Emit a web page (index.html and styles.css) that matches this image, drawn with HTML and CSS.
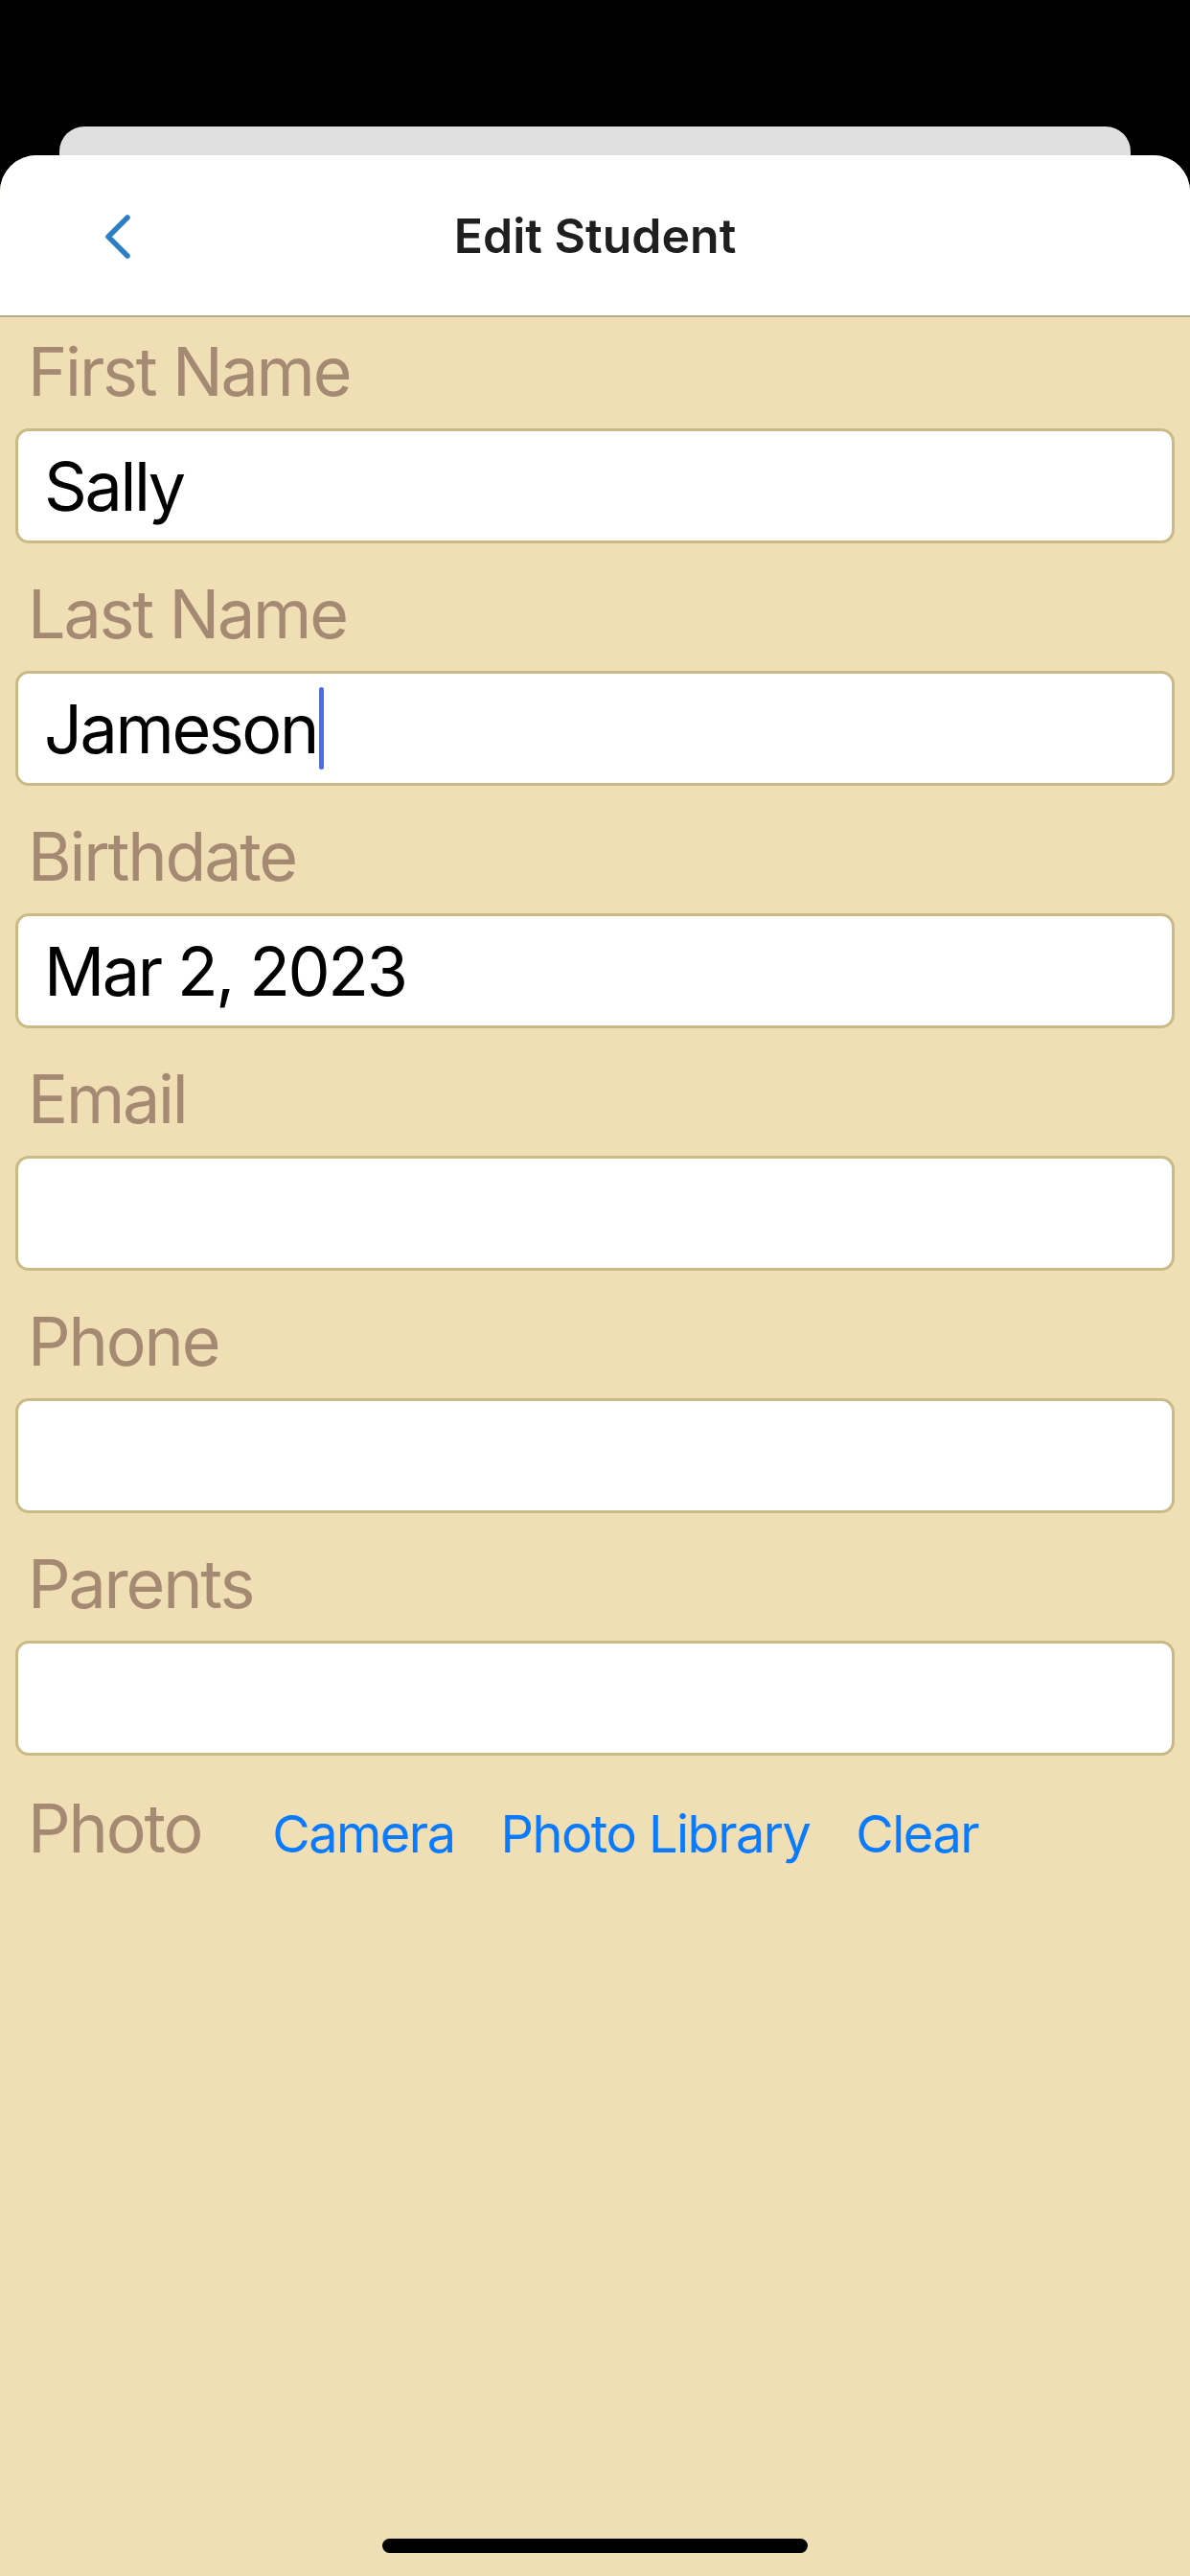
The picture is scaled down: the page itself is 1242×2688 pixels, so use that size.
FILE: index.html
```html
<!DOCTYPE html>
<html lang="en">
<head>
  <meta charset="UTF-8" />
  <title>Edit Student</title>
  <link rel="stylesheet" href="styles.css">
</head>
<body>
  <div class="screen">
    <div class="backdrop">
      <div class="peek"></div>
    </div>

    <div class="sheet">
      <header class="nav">
        <button class="back" aria-label="Back">
          <svg width="32" height="48" viewBox="0 0 32 48">
            <path d="M27 4 L7 24 L27 44" fill="none" stroke="#2b7fc3" stroke-width="5.5" stroke-linecap="round" stroke-linejoin="round"/>
          </svg>
        </button>
        <h1>Edit Student</h1>
      </header>

      <main class="form">
        <label class="label">First Name</label>
        <div class="field">Sally</div>

        <label class="label">Last Name</label>
        <div class="field">Jameson<span class="caret"></span></div>

        <label class="label">Birthdate</label>
        <div class="field">Mar 2, 2023</div>

        <label class="label">Email</label>
        <div class="field"></div>

        <label class="label">Phone</label>
        <div class="field"></div>

        <label class="label">Parents</label>
        <div class="field"></div>

        <div class="photo-row">
          <span class="label photo-label">Photo</span>
          <a class="link">Camera</a>
          <a class="link">Photo Library</a>
          <a class="link">Clear</a>
        </div>
      </main>

      <div class="home">
        <div class="home-bar"></div>
      </div>
    </div>
  </div>
</body>
</html>
```

FILE: styles.css
```css
* { box-sizing: border-box; }
html, body {
  margin: 0;
  background: #000;
}
body {
  font-family: Inter, "Noto Sans", "Liberation Sans", sans-serif;
}
.screen {
  width: 1242px;
  height: 2688px;
  display: flex;
  flex-direction: column;
  background: #000;
  overflow: hidden;
}
.backdrop {
  height: 162px;
  padding: 132px 62px 0;
}
.peek {
  height: 30px;
  background: #e0e0e0;
  border-radius: 26px 26px 0 0;
}
.sheet {
  flex: 1;
  display: flex;
  flex-direction: column;
  background: #f0dfb4;
  border-radius: 38px 38px 0 0;
  overflow: hidden;
}
.nav {
  height: 169px;
  background: #fff;
  border-bottom: 2px solid #b8ab8a;
  display: flex;
  align-items: center;
  justify-content: center;
  position: relative;
}
.nav h1 {
  margin: 0;
  font-size: 50px;
  font-weight: 600;
  color: #1f1f1f;
  letter-spacing: 0;
}
.back {
  position: absolute;
  left: 106px;
  top: 61px;
  border: none;
  background: none;
  padding: 0;
  display: flex;
}
.form {
  flex: 1;
  display: flex;
  flex-direction: column;
  padding: 15px 16px 0;
}
.label {
  display: block;
  font-size: 70px;
  line-height: 84px;
  color: #a58a73;
  letter-spacing: -2.2px;
  padding-left: 13px;
  margin-bottom: 17px;
}
.field {
  height: 120px;
  background: #fff;
  border: 3px solid #c9ba86;
  border-radius: 14px;
  margin-bottom: 32px;
  padding: 0 27px;
  display: flex;
  align-items: center;
  font-size: 70px;
  letter-spacing: -2.4px;
  color: #000;
}
.caret {
  width: 5px;
  height: 86px;
  margin-left: 2px;
  background: #4a6cf0;
  border-radius: 3px;
}
.photo-row {
  display: flex;
  align-items: baseline;
  margin-top: 2px;
}
.photo-label {
  margin-bottom: 0;
  margin-right: 74px;
}
.link {
  font-size: 54px;
  letter-spacing: -1.5px;
  color: #0a7aff;
  margin-right: 48px;
}
.home {
  display: flex;
  justify-content: center;
  padding-bottom: 24px;
}
.home-bar {
  width: 444px;
  height: 15px;
  border-radius: 8px;
  background: #000;
}
```
